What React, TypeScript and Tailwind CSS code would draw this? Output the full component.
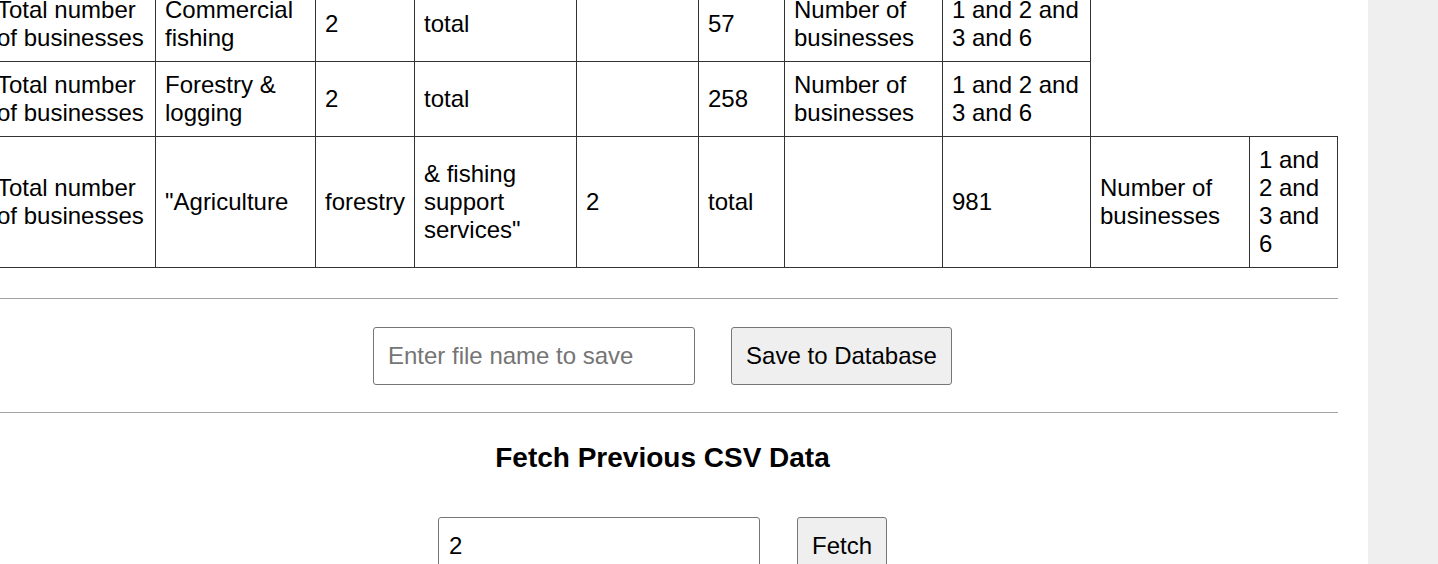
import React from 'react';

type Row = string[];

const rows: Row[] = [
  ['Total number of businesses', 'Commercial fishing', '2', 'total', '', '57', 'Number of businesses', '1 and 2 and 3 and 6'],
  ['Total number of businesses', 'Forestry & logging', '2', 'total', '', '258', 'Number of businesses', '1 and 2 and 3 and 6'],
  [
    'Total number of businesses',
    '"Agriculture',
    'forestry',
    '& fishing support services"',
    '2',
    'total',
    '',
    '981',
    'Number of businesses',
    '1 and 2 and 3 and 6',
  ],
];

const colWidths = [168, 160, 99, 162, 122, 86, 158, 148, 159, 88];

const Divider = ({ className }: { className: string }) => (
  <div className={`w-full border-t border-[#a3a3a3] ${className}`} />
);

const App: React.FC = () => {
  return (
    <div className="flex w-[1438px] h-[564px] overflow-hidden bg-[#efefef] font-['Liberation_Sans',Arial,sans-serif] text-black">
      <div className="w-[1368px] shrink-0 h-full overflow-hidden bg-white">
        <div className="w-[1351px] -ml-[13px] -mt-[14px]">
          <table className="table-fixed border-collapse w-[1351px] text-[24px] leading-[normal]">
            <colgroup>
              {colWidths.map((w, i) => (
                <col key={i} style={{ width: w }} />
              ))}
            </colgroup>
            <tbody>
              {rows.map((row, r) => (
                <tr key={r}>
                  {row.map((cell, c) => (
                    <td key={c} className="border border-[#333333] pl-[9px] pr-[8px] py-[9px] align-middle text-left">
                      {cell}
                    </td>
                  ))}
                </tr>
              ))}
            </tbody>
          </table>

          <Divider className="mt-[30px]" />

          <div className="flex justify-center gap-[36px] mt-[28px]">
            <input
              type="text"
              placeholder="Enter file name to save"
              className="w-[322px] h-[58px] border border-[#767676] rounded-[3px] px-[14px] text-[24px] bg-white placeholder:text-[#757575] outline-none"
            />
            <button className="w-[221px] h-[58px] border border-[#767676] rounded-[3px] bg-[#efefef] text-[24px]">
              Save to Database
            </button>
          </div>

          <Divider className="mt-[27px]" />

          <h3 className="mt-[29px] text-center text-[28px] font-bold leading-[normal]">Fetch Previous CSV Data</h3>

          <div className="flex justify-center gap-[37px] mt-[43px]">
            <input
              type="text"
              defaultValue="2"
              className="w-[322px] h-[58px] border border-[#767676] rounded-[3px] px-[10px] text-[24px] bg-white outline-none"
            />
            <button className="w-[90px] h-[58px] border border-[#767676] rounded-[3px] bg-[#efefef] text-[24px]">
              Fetch
            </button>
          </div>
        </div>
      </div>
    </div>
  );
};

export default App;
